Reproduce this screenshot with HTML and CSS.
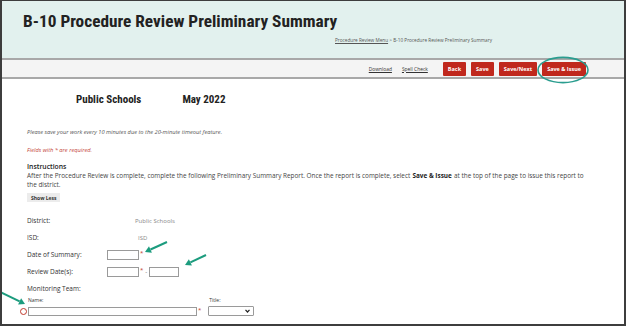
FILE: index.html
```html
<!DOCTYPE html>
<html>
<head>
<title>B-10 Procedure Review Preliminary Summary</title>
<link rel="stylesheet" href="styles.css">
</head>
<body>
<div class="frame">
  <div class="page-header">
    <h1>B-10 Procedure Review Preliminary Summary</h1>
    <div class="breadcrumb"><a href="#">Procedure Review Menu</a> &gt; B-10 Procedure Review Preliminary Summary</div>
  </div>

  <div class="toolbar">
    <a href="#" class="tool-link">Download</a>
    <a href="#" class="tool-link">Spell Check</a>
    <button class="btn btn-first">Back</button>
    <button class="btn">Save</button>
    <button class="btn">Save/Next</button>
    <button class="btn">Save &amp; Issue</button>
  </div>

  <div class="content">
    <div class="report-title">
      <span>Public Schools</span>
      <span>May 2022</span>
    </div>

    <p class="note">Please save your work every 10 minutes due to the 20-minute timeout feature.</p>
    <p class="note required-note">Fields with * are required.</p>

    <div class="instructions-title">Instructions</div>
    <p class="instructions">After the Procedure Review is complete, complete the following Preliminary Summary Report. Once the report is complete, select <b>Save &amp; Issue</b> at the top of the page to issue this report to<br>the district.</p>

    <button class="show-less">Show Less</button>

    <div class="fields">
      <div class="field-label">District:</div>
      <div class="field-value"><span class="readonly">Public Schools</span></div>

      <div class="field-label">ISD:</div>
      <div class="field-value"><span class="readonly readonly-isd">ISD</span></div>

      <div class="field-label">Date of Summary:</div>
      <div class="field-value"><input type="text" class="date-input"><span class="req">*</span></div>

      <div class="field-label">Review Date(s):</div>
      <div class="field-value"><input type="text" class="date-input"><span class="req">*</span><span class="dash">-</span><input type="text" class="date-input date-end"></div>

      <div class="field-label">Monitoring Team:</div>
      <div class="field-value"></div>
    </div>

    <div class="team-row">
      <div class="team-name">
        <label class="small-label">Name:</label>
        <div class="input-line">
          <span class="error-icon"></span>
          <input type="text" class="name-input"><span class="req">*</span>
        </div>
      </div>
      <div class="team-title">
        <label class="small-label">Title:</label>
        <div class="select-wrap">
          <select class="title-select"><option></option></select>
          <svg class="chevron" width="5" height="4" viewBox="0 0 5 4"><path d="M0.5 0.8 L2.5 3 L4.5 0.8" fill="none" stroke="#222" stroke-width="1.2"/></svg>
        </div>
      </div>
    </div>
  </div>

  <svg class="annotations" width="626" height="326" viewBox="0 0 626 326">
    <ellipse cx="563" cy="70" rx="25" ry="12.6" fill="none" stroke="#2a9d8f" stroke-width="1.6"/>
    <line x1="167" y1="242" x2="150.5" y2="249.5" stroke="#1c9c7e" stroke-width="2"/>
    <polygon points="145,252 151.9,252.7 149,246.3" fill="#1c9c7e"/>
    <line x1="206" y1="255" x2="190.4" y2="262.4" stroke="#1c9c7e" stroke-width="2"/>
    <polygon points="185,265 191.9,265.6 188.9,259.3" fill="#1c9c7e"/>
    <line x1="0" y1="292" x2="19.6" y2="301.4" stroke="#1c9c7e" stroke-width="2"/>
    <polygon points="25,304 18.1,304.6 21.1,298.3" fill="#1c9c7e"/>
  </svg>
</div>
</body>
</html>
```

FILE: styles.css
```css
body {
  margin: 0;
  font-family: "Open Sans", sans-serif;
  color: #333;
  background-color: #fff;
}

.frame {
  position: relative;
  width: 626px;
  height: 326px;
  box-sizing: border-box;
  border: 2px solid #3d3d3d;
  border-top-width: 1px;
  overflow: hidden;
  background-color: #fff;
}

/* header */

.page-header {
  height: 57px;
  box-sizing: border-box;
  padding: 11px 132px 0 21px;
  background-color: #e2f1ee;
}

.page-header h1 {
  margin: 0;
  font-family: "Roboto Condensed", Roboto, sans-serif;
  font-stretch: condensed;
  font-size: 17.3px;
  line-height: 19px;
  font-weight: 700;
  color: #222;
}

.breadcrumb {
  margin-top: 6px;
  text-align: right;
  font-size: 4.7px;
  line-height: 7px;
  color: #555;
}

.breadcrumb a {
  color: #555;
}

/* toolbar */

.toolbar {
  display: flex;
  justify-content: flex-end;
  align-items: center;
  height: 17px;
  padding-right: 38px;
  background-color: #f4f4f4;
  border-top: 2px solid #a8a8a8;
  border-bottom: 2px solid #a8a8a8;
}

.tool-link {
  font-size: 4.9px;
  color: #333;
  margin-left: 10px;
}

.btn {
  height: 14px;
  margin-left: 5px;
  padding: 0 5px;
  font-family: "Open Sans", sans-serif;
  font-size: 5.5px;
  font-weight: 700;
  color: #fff;
  background-color: #c0281d;
  border: none;
  border-radius: 1px;
}

.btn-first {
  margin-left: 15px;
}

/* content */

.content {
  padding: 0 25px;
}

.report-title {
  display: flex;
  gap: 41px;
  margin-top: 14px;
  padding-left: 49px;
  font-family: "Roboto Condensed", Roboto, sans-serif;
  font-stretch: condensed;
  font-size: 11px;
  line-height: 14px;
  font-weight: 700;
  color: #222;
}

.note {
  margin: 21px 0 0;
  font-size: 5.7px;
  line-height: 8px;
  font-style: italic;
  color: #555;
}

.required-note {
  margin-top: 10px;
  color: #c4463a;
}

.instructions-title {
  margin-top: 8px;
  font-size: 6.8px;
  line-height: 9px;
  font-weight: 600;
  color: #222;
}

.instructions {
  margin: 0;
  font-size: 6.4px;
  line-height: 9px;
  color: #444;
}

.instructions b {
  margin: 0 0.5px;
  color: #222;
}

.show-less {
  display: block;
  height: 9px;
  margin-top: 4px;
  padding: 0 4px;
  font-family: "Open Sans", sans-serif;
  font-size: 5px;
  font-weight: 700;
  color: #333;
  background-color: #ececec;
  border: none;
}

.fields {
  display: grid;
  grid-template-columns: 80px 1fr;
  grid-auto-rows: 17px;
  align-items: center;
  margin-top: 10px;
  font-size: 6.5px;
}

.field-value {
  display: flex;
  align-items: center;
}

.readonly {
  padding-left: 28px;
  font-size: 6px;
  color: #888;
}

.readonly-isd {
  padding-left: 31px;
}

.date-input {
  width: 32px;
  height: 10px;
  box-sizing: border-box;
  margin: 0;
  padding: 0;
  border: 1px solid #9a9a9a;
}

.date-end {
  width: 30px;
}

.req {
  align-self: flex-start;
  margin-left: 1px;
  font-size: 6px;
  line-height: 6px;
  color: #c0392b;
}

.dash {
  margin: 0 2px 0 2px;
  font-size: 6px;
  color: #555;
}

/* monitoring team */

.team-row {
  display: flex;
  gap: 7px;
}

.small-label {
  display: block;
  padding-left: 1px;
  font-size: 5px;
  line-height: 7px;
  color: #333;
}

.input-line {
  display: flex;
  align-items: center;
  margin-top: 3px;
}

.error-icon {
  width: 7px;
  height: 7px;
  box-sizing: border-box;
  margin-left: -7px;
  margin-right: 1px;
  border: 1.6px solid #c0392b;
  border-radius: 50%;
  background-color: #fff;
}

.name-input {
  width: 169px;
  height: 9px;
  box-sizing: border-box;
  margin: 0;
  padding: 0;
  border: 1px solid #9a9a9a;
}

.select-wrap {
  position: relative;
  margin-top: 2px;
}

.title-select {
  display: block;
  width: 46px;
  height: 10px;
  margin: 0;
  padding: 0;
  appearance: none;
  background-color: #fff;
  border: 1px solid #9a9a9a;
  border-radius: 1px;
}

.chevron {
  position: absolute;
  top: 3px;
  right: 4px;
}

.annotations {
  position: absolute;
  top: -1px;
  left: -2px;
  pointer-events: none;
}
```
